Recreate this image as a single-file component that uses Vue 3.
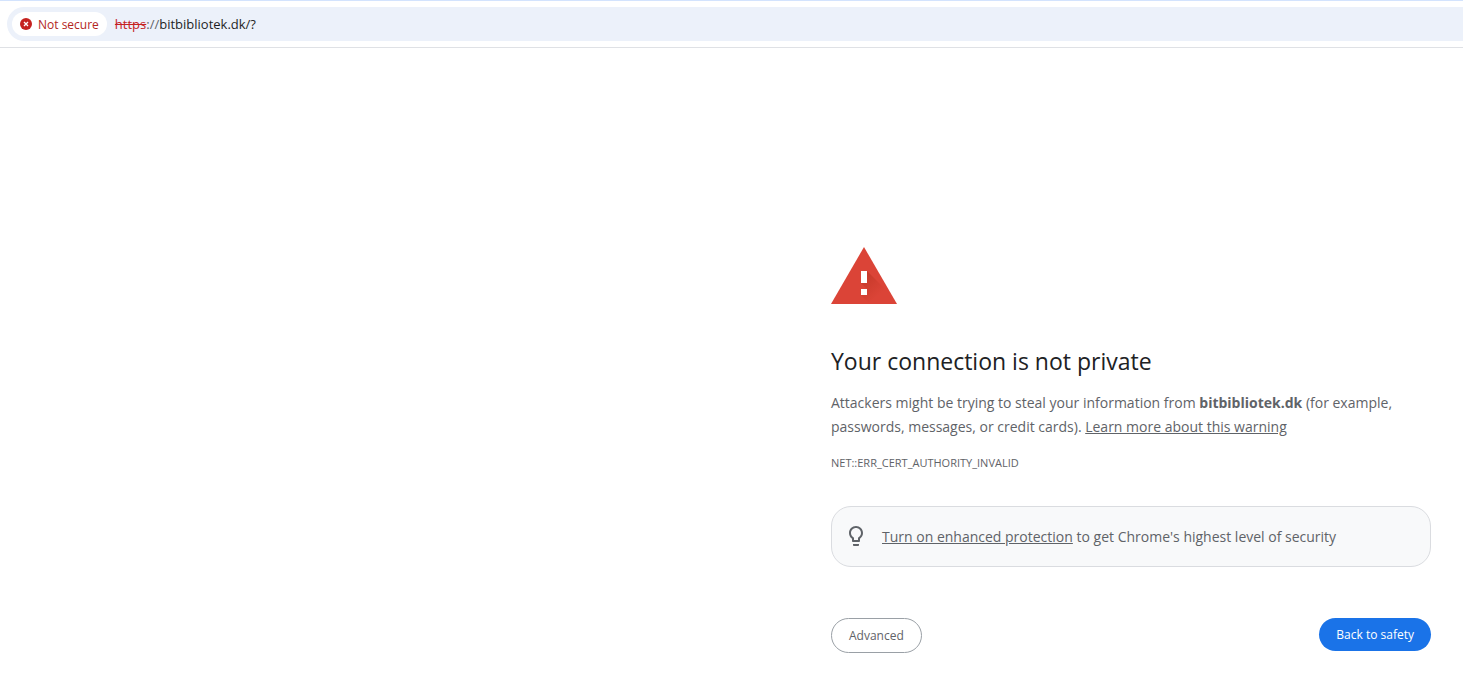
<script setup>
import { ref } from 'vue'

const address = ref('bitbibliotek.dk/?')
const host = 'bitbibliotek.dk'
</script>

<template>
  <div class="page">
    <header class="toolbar">
      <div class="omnibox">
        <button class="security" type="button">
          <svg width="12" height="12" viewBox="0 0 12 12" aria-hidden="true">
            <circle cx="6" cy="6" r="6" fill="#c5221f" />
            <path d="M4 4l4 4M8 4L4 8" stroke="#fff" stroke-width="1.3" />
          </svg>
          <span>Not secure</span>
        </button>
        <label class="scheme" for="address"><s>https</s>://</label>
        <input id="address" v-model="address" class="address" type="text" spellcheck="false" />
      </div>
    </header>

    <main class="warning">
      <svg class="alert" width="66" height="57" viewBox="0 0 66 57" aria-hidden="true">
        <defs>
          <linearGradient id="shade" x1="33" y1="27" x2="50" y2="46" gradientUnits="userSpaceOnUse">
            <stop offset="0" stop-color="#a52714" stop-opacity=".4" />
            <stop offset="1" stop-color="#a52714" stop-opacity="0" />
          </linearGradient>
        </defs>
        <path d="M33 0L66 57H0z" fill="#db4437" />
        <path d="M36 24L54.5 42.5 63 57H39L30 48l6-6-6-6z" fill="url(#shade)" />
        <path d="M30 24h6v12h-6zM30 42h6v6h-6z" fill="#fff" />
      </svg>
      <h1>Your connection is not private</h1>
      <p class="message">
        Attackers might be trying to steal your information from <strong>{{ host }}</strong>
        <span> (for example, </span>
        <span>passwords, messages, or credit cards). </span>
        <a href="#learn-more">Learn more about this warning</a>
      </p>
      <p class="code">NET::ERR_CERT_AUTHORITY_INVALID</p>
      <div class="promo">
        <svg width="24" height="24" viewBox="0 0 24 24" aria-hidden="true">
          <path
            fill="#5f6368"
            d="M9 20c0 .5.4 1 1 1h4c.6 0 1-.5 1-1v-1H9v1zm3-19C8.1 1 5 4.100 5 8c0 2.400 1.200 4.500 3 5.700V16c0 .5.4 1 1 1h6c.6 0 1-.5 1-1v-2.300c1.800-1.300 3-3.400 3-5.700 0-3.900-3.100-7-7-7zm2.900 11.100l-.9.6V15h-4v-2.300l-.9-.6C7.800 11.200 7 9.600 7 8c0-2.800 2.200-5 5-5s5 2.200 5 5c0 1.600-.8 3.200-2.100 4.100z"
          />
        </svg>
        <p><a href="#enhanced-protection">Turn on enhanced protection</a> to get Chrome's highest level of security</p>
      </div>
      <div class="actions">
        <button class="advanced" type="button">Advanced</button>
        <button class="safety" type="button">Back to safety</button>
      </div>
    </main>
  </div>
</template>

<style>
body {
  background: #fff;
}
</style>

<style scoped>
.page {
  color: #5f6368;
  font-family: "Segoe UI", "Open Sans", "Noto Sans", sans-serif;
  font-size: 14px;
}

button,
input {
  font-family: inherit;
}

button {
  cursor: pointer;
}

.toolbar {
  padding: 6px 0 6px 7px;
  border-top: 1px solid #d3e3fd;
  border-bottom: 1px solid #dfe1e5;
}

.omnibox {
  display: flex;
  align-items: center;
  height: 34px;
  padding-left: 5px;
  border-radius: 17px 0 0 17px;
  background: #ecf1fa;
  font-size: 13px;
}

.security {
  display: flex;
  align-items: center;
  gap: 6px;
  height: 24px;
  margin-right: 8px;
  padding: 0 8px;
  border: 0;
  border-radius: 12px;
  background: #fff;
  color: #b3261e;
  font-size: 12px;
  font-weight: 500;
}

.scheme s {
  color: #c5221f;
}

.address {
  flex: 1;
  min-width: 0;
  padding: 0;
  border: 0;
  outline: 0;
  background: transparent;
  color: #1f1f1f;
  font-size: 13px;
}

.warning {
  max-width: 600px;
  margin: 199px 32px 0 auto;
}

.alert {
  display: block;
}

h1 {
  margin: 41px 0 14px;
  color: #202124;
  font-size: 23px;
  font-weight: 400;
  line-height: 32px;
}

p {
  margin: 0;
  line-height: 24px;
}

a {
  color: inherit;
  text-decoration: underline;
}

.code {
  margin-top: 12px;
  font-size: 11px;
}

.promo {
  display: flex;
  align-items: center;
  gap: 14px;
  margin-top: 31px;
  padding: 18px 12px 17px;
  border: 1px solid #dadce0;
  border-radius: 20px;
  background: #f8f9fa;
}

.actions {
  display: flex;
  align-items: flex-start;
  justify-content: space-between;
  margin-top: 51px;
}

.actions button {
  padding: 8px 17px;
  border: 0;
  border-radius: 18px;
  font-size: 12px;
  line-height: 17px;
}

.actions .advanced {
  border: 1px solid #9aa0a6;
  background: #fff;
  color: #5f6368;
}

.actions .safety {
  background: #1a73e8;
  color: #fff;
}
</style>
